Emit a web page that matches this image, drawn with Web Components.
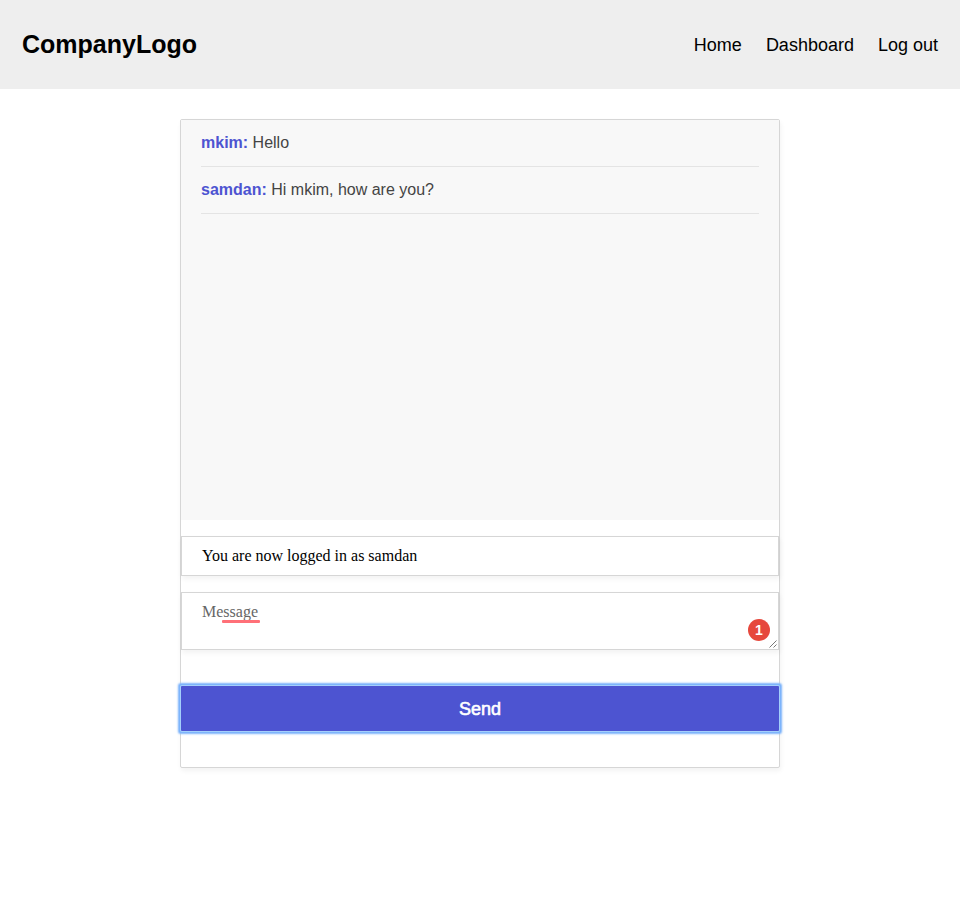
<!DOCTYPE html>
<html lang="en">
<head>
<meta charset="utf-8">
<title>Chat</title>
<style>
body { margin: 0; min-height: 915px; background: #fff; color: #000; font-family: "Liberation Sans", Arial, sans-serif; }
</style>
</head>
<body>
<site-header>
  <nav-link>Home</nav-link>
  <nav-link>Dashboard</nav-link>
  <nav-link>Log out</nav-link>
</site-header>
<chat-panel>
  <chat-message slot="messages" author="mkim">Hello</chat-message>
  <chat-message slot="messages" author="samdan">Hi mkim, how are you?</chat-message>
  <status-field>You are now logged in as samdan</status-field>
  <message-box placeholder="Message" count="1"></message-box>
  <send-button>Send</send-button>
</chat-panel>
<script>
function define(name, markup, setup) {
  const template = document.createElement('template');
  template.innerHTML = markup;
  customElements.define(name, class extends HTMLElement {
    constructor() {
      super();
      this.attachShadow({ mode: 'open' }).append(template.content.cloneNode(true));
    }
    connectedCallback() { if (setup) setup(this, this.shadowRoot); }
  });
}

define('site-header', `
  <style>
    :host { display: flex; box-sizing: border-box; height: 89px; padding: 0 22px; background: #eee; align-items: center; justify-content: space-between; }
    strong { font-size: 25px; line-height: 29px; }
    nav { display: flex; gap: 24px; padding-top: 2px; }
  </style>
  <strong>CompanyLogo</strong><nav><slot></slot></nav>`);

define('nav-link', `
  <style>:host { display: block; font-size: 18px; line-height: 21px; }</style><slot></slot>`);

define('chat-panel', `
  <style>
    :host { display: block; box-sizing: border-box; width: 600px; height: 649px; margin: 30px auto 0; border: 1px solid #d6d6d6; border-radius: 2px; box-shadow: 1px 3px 5px rgba(0,0,0,.05); background: #fff; }
    .log { box-sizing: border-box; height: 400px; padding: 0 20px; background: #f8f8f8; }
    .form { display: flex; flex-direction: column; gap: 16px; padding-top: 16px; }
  </style>
  <div class="log"><slot name="messages"></slot></div>
  <div class="form"><slot></slot></div>`);

define('chat-message', `
  <style>
    :host { display: block; box-sizing: border-box; height: 47px; padding-top: 13px; border-bottom: 1px solid #e4e4e4; font-size: 16px; line-height: 19px; color: #444; }
    b { color: #4d54d1; }
  </style>
  <b></b> <slot></slot>`, (host, root) => {
  root.querySelector('b').textContent = host.getAttribute('author') + ':';
});

define('status-field', `
  <style>
    :host { display: block; box-sizing: border-box; height: 40px; padding: 10px 20px; border: 1px solid #d6d6d6; box-shadow: 1px 3px 5px rgba(0,0,0,.05); background: #fff; font: 16px/18px "Liberation Serif", "Times New Roman", serif; }
  </style><slot></slot>`);

define('message-box', `
  <style>
    :host { display: block; position: relative; box-sizing: border-box; height: 58px; padding: 10px 20px; border: 1px solid #d6d6d6; box-shadow: 1px 3px 5px rgba(0,0,0,.05); background: #fff; font: 16px/18px "Liberation Serif", "Times New Roman", serif; color: #666; }
    .mark { position: absolute; left: 40px; top: 27px; width: 38px; height: 3px; border-radius: 1px; background: #ff7078; }
    .badge { position: absolute; right: 8px; top: 26px; width: 22px; height: 22px; border-radius: 50%; background: #e6483d; color: #fff; font: bold 14px/22px "Liberation Sans", Arial, sans-serif; text-align: center; }
    svg { position: absolute; right: 1px; bottom: 1px; width: 8px; height: 8px; }
  </style>
  <span class="text"></span><i class="mark"></i><span class="badge"></span>
  <svg viewBox="0 0 8 8"><path d="M.5 7.5 7.5.5M4.5 7.5l3-3" stroke="#555" stroke-width=".8"/></svg>`, (host, root) => {
  root.querySelector('.text').textContent = host.getAttribute('placeholder');
  root.querySelector('.badge').textContent = host.getAttribute('count');
});

define('send-button', `
  <style>
    :host { display: block; position: relative; margin-top: 20px; height: 45px; border-radius: 1px; background: #4d54d1; box-shadow: 0 0 0 1px #a4cffb, 0 0 0 2px #7db4fb, 0 0 2px 3px #7db4fb; color: #fff; font-size: 18px; line-height: 46px; text-align: center; -webkit-text-stroke: .6px #fff; }
  </style><slot></slot>`);
</script>
</body>
</html>
